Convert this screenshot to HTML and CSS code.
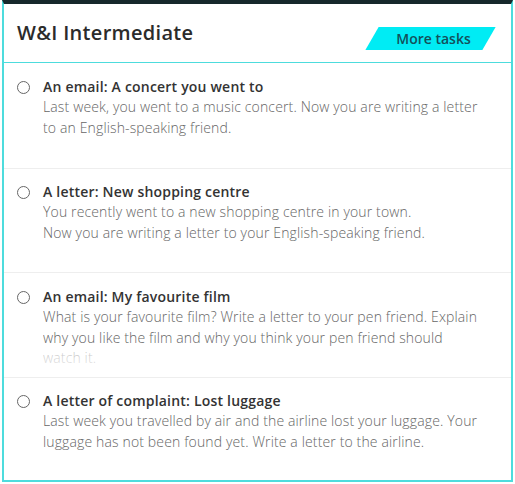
FILE: index.html
```html
<!DOCTYPE html>
<html>
<head>
<meta charset="utf-8">
<link rel="stylesheet" href="styles.css">
</head>
<body>
<div class="card">
  <div class="header">
    <h1 class="title">W&amp;I Intermediate</h1>
    <a class="more" href="#"><span>More tasks</span></a>
  </div>
  <ul class="tasks">
    <li class="task first">
      <span class="radio"></span>
      <div class="body">
        <div class="task-title">An email: A concert you went to</div>
        <div class="desc">Last week, you went to a music concert. Now you are writing a letter to an English-speaking friend.</div>
      </div>
    </li>
    <li class="task short">
      <span class="radio"></span>
      <div class="body">
        <div class="task-title">A letter: New shopping centre</div>
        <div class="desc">You recently went to a new shopping centre in your town.<br>Now you are writing a letter to your English-speaking friend.</div>
      </div>
    </li>
    <li class="task">
      <span class="radio"></span>
      <div class="body">
        <div class="task-title">An email: My favourite film</div>
        <div class="desc">What is your favourite film? Write a letter to your pen friend. Explain why you like the film and why you think your pen friend should watch it.</div>
      </div>
    </li>
    <li class="task last">
      <span class="radio"></span>
      <div class="body">
        <div class="task-title">A letter of complaint: Lost luggage</div>
        <div class="desc">Last week you travelled by air and the airline lost your luggage. Your luggage has not been found yet. Write a letter to the airline.</div>
      </div>
    </li>
  </ul>
</div>
</body>
</html>
```

FILE: styles.css
```css
html, body {
  margin: 0;
  padding: 0;
  background: #ffffff;
}
body {
  font-family: "Open Sans", "Liberation Sans", sans-serif;
}
.card {
  width: 507px;
  margin-left: 2px;
  border: 2px solid #4ddcdd;
  border-top: 4px solid #16282b;
  background: #fff;
  box-shadow: 0 3px 0 #c9ccd4;
}
.header {
  height: 59px;
  border-bottom: 1px solid #4ddcdd;
  display: flex;
  justify-content: space-between;
  align-items: flex-start;
  padding: 0 22px 0 13px;
  box-sizing: border-box;
}
.title {
  margin: 15px 0 0;
  font-size: 20px;
  font-weight: 600;
  line-height: 28px;
  letter-spacing: 0.3px;
  color: #2b2b2b;
}
.more {
  margin-top: 23px;
  position: relative;
  width: 117px;
  height: 23px;
  display: flex;
  align-items: center;
  justify-content: center;
  text-decoration: none;
  color: #13505a;
  font-size: 14px;
  font-weight: 600;
}
.more::before {
  content: "";
  position: absolute;
  inset: 0;
  background: #00ecf4;
  transform: skewX(-30deg);
}
.more span {
  position: relative;
  padding-left: 6px;
}
.tasks {
  list-style: none;
  margin: 0;
  padding: 0;
}
.task {
  display: flex;
  align-items: flex-start;
  height: 105px;
  box-sizing: border-box;
  padding: 14px 0 0 13px;
  border-bottom: 1px solid #eeeeee;
}
.task.first {
  height: 106px;
}
.task.short {
  height: 104px;
  padding-top: 13px;
}
.task.last {
  border-bottom: none;
  height: 102px;
  padding-top: 13px;
}
.radio {
  flex: none;
  width: 11px;
  height: 11px;
  border: 1px solid #666;
  border-radius: 50%;
  margin-top: 4px;
  margin-right: 13px;
}
.body {
  width: 437px;
}
.task-title {
  font-size: 14px;
  font-weight: 600;
  line-height: 20px;
  letter-spacing: 0.2px;
  color: #333;
}
.desc {
  position: relative;
  font-size: 14px;
  font-weight: 300;
  line-height: 20.5px;
  letter-spacing: 0.14px;
  color: #666;
  max-height: 61px;
  overflow: hidden;
}
.desc::after {
  content: "";
  position: absolute;
  left: 0;
  right: 0;
  top: 40px;
  height: 21px;
  background: linear-gradient(to bottom, rgba(255,255,255,0.55), rgba(255,255,255,0.85));
}
```
